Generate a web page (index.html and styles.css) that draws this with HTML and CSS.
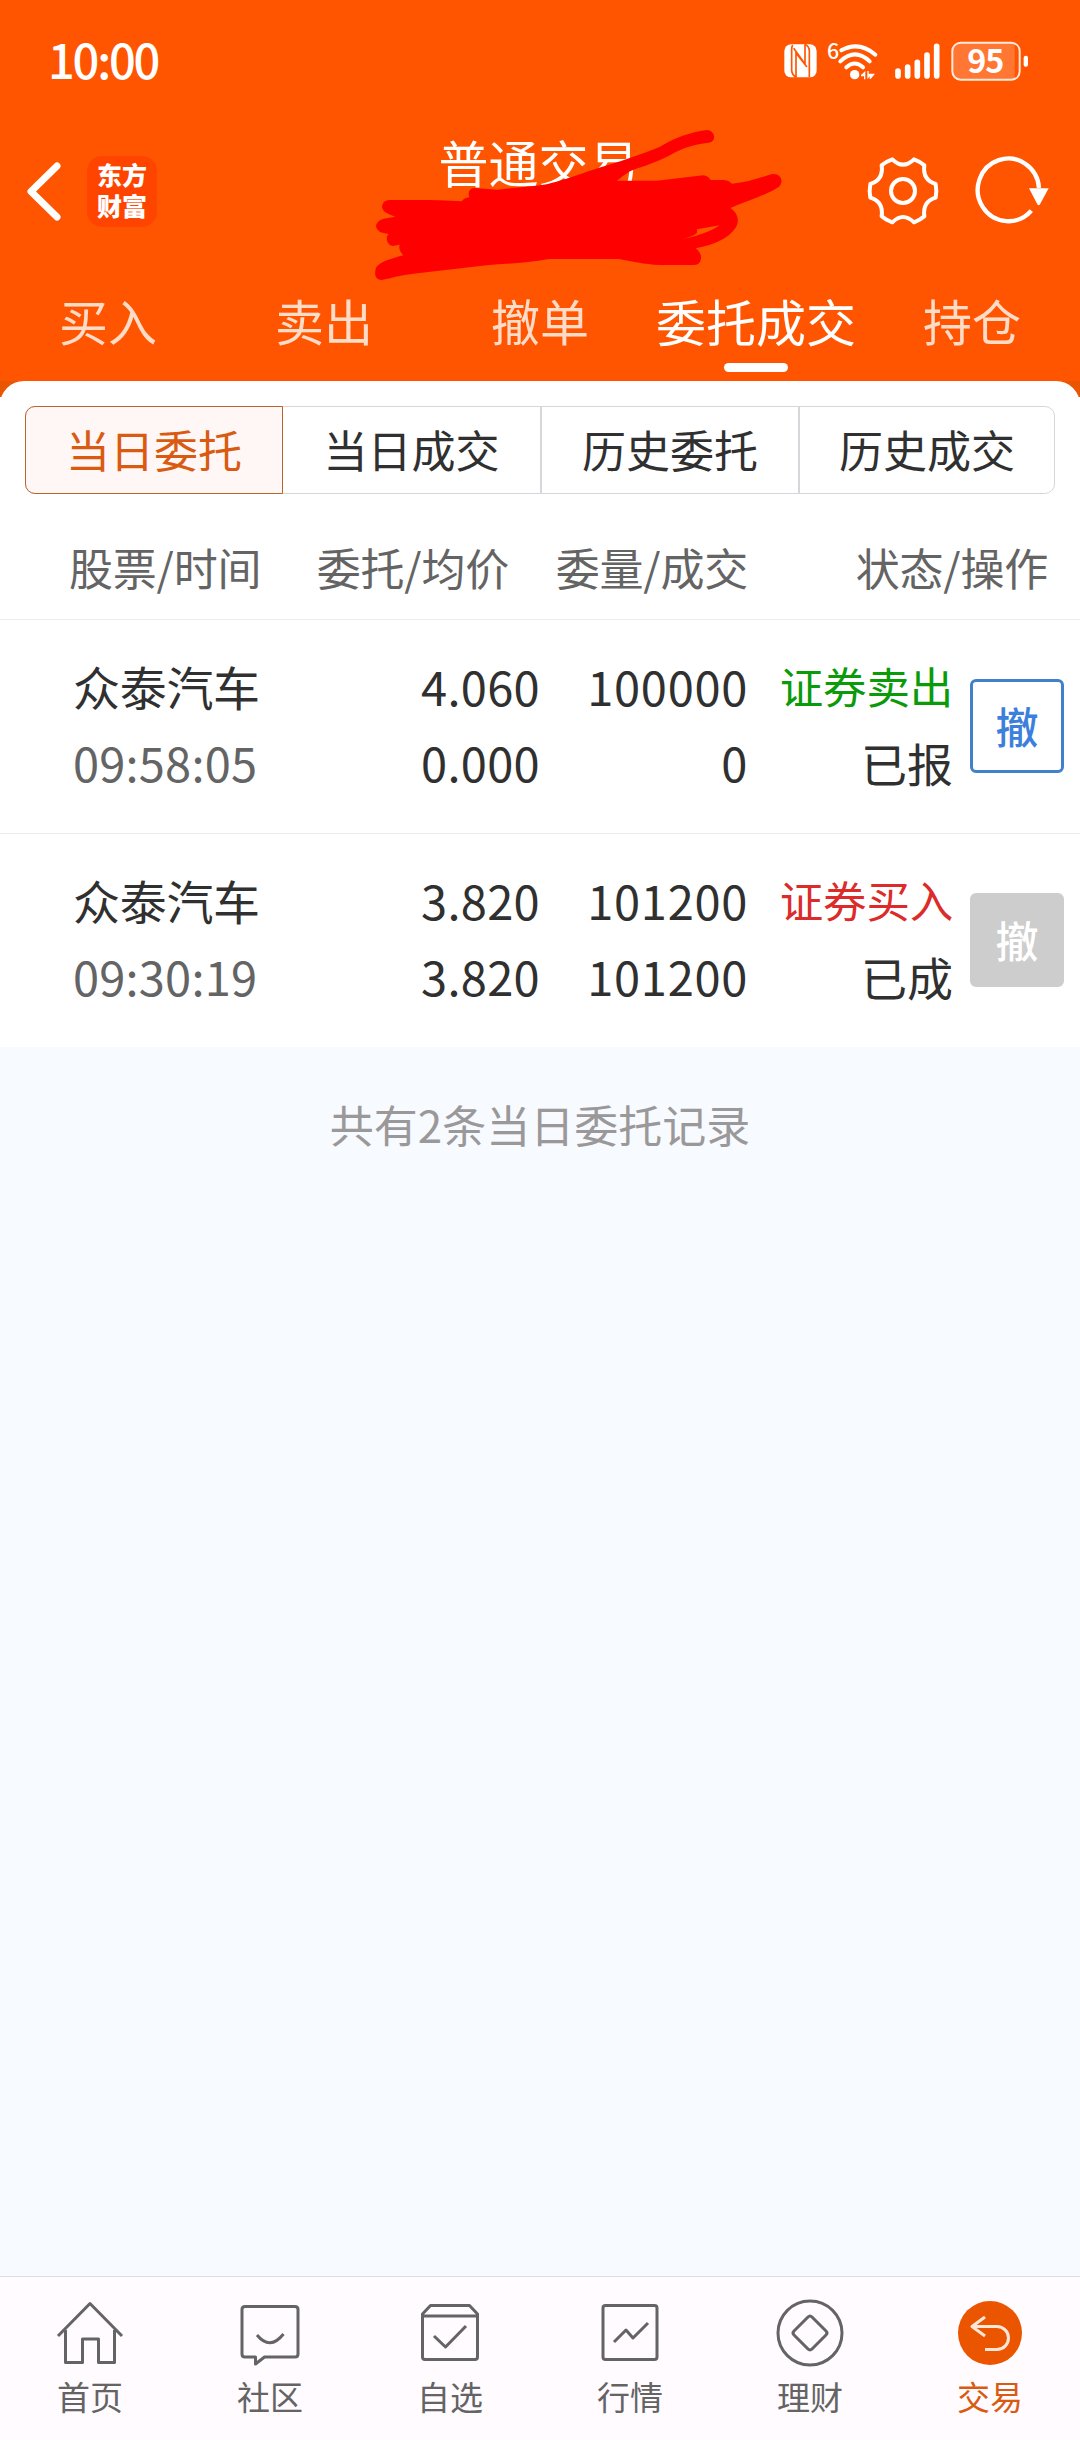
FILE: index.html
```html
<!DOCTYPE html>
<html lang="zh-CN">
<head>
    <meta charset="UTF-8">
    <meta name="viewport" content="width=device-width, initial-scale=1.0">
    <title>普通交易</title>
    <link rel="stylesheet" href="styles.css">
</head>
<body>
    <header class="header">
        <div class="status-bar">
            <span class="clock">10:00</span>
            <div class="status-icons">
                <svg class="icon-nfc" width="33" height="34" viewBox="72 71 99 102">
                    <rect x="73" y="72" width="97" height="99" rx="20" fill="#fff"/>
                    <path d="M98 74Q95 78 95 90V150Q96 165 110 171M148 171V92Q148 78 134 72" fill="none" stroke="#ff5500" stroke-width="5"/>
                    <path d="M108 170V98L141 140M135 73V131L101 84" fill="none" stroke="#ff5500" stroke-width="5"/>
                </svg>
                <svg class="icon-wifi" width="51" height="39" viewBox="200 62 153 117">
                    <text x="200" y="114" class="wifi-gen">6</text>
                    <g fill="none" stroke="#fff" stroke-width="12" stroke-linecap="round">
                        <path d="M243 87Q296 58 345 100"/>
                        <path d="M240 120Q284 78 328 120"/>
                        <path d="M258 138Q283 115 308 138"/>
                    </g>
                    <circle cx="283" cy="160" r="14" fill="#fff"/>
                    <path d="M302 161L315 149V174H311V165H302ZM321 149H325V157H344L331 173H328V165L321 174Z" fill="#fff"/>
                </svg>
                <svg class="icon-signal" width="45" height="36" viewBox="403 67 135 108">
                    <g stroke="#fff" stroke-width="17" stroke-linecap="round">
                        <path d="M412 151V166M441 139V166M470 125V166M499 103V166M528 77V166"/>
                    </g>
                </svg>
                <svg class="icon-battery" width="78" height="40" viewBox="572 61 234 120">
                    <rect x="576" y="66" width="202" height="111" rx="25" fill="#ff7733" stroke="#ffe9dc" stroke-width="6"/>
                    <path d="M763 72Q774 75 774 91V152Q774 168 763 171Z" fill="#ff5500"/>
                    <rect x="790" y="105" width="13" height="33" rx="6" fill="#fff"/>
                    <text x="675" y="158" text-anchor="middle" class="battery-level">95</text>
                </svg>
            </div>
        </div>

        <div class="title-bar">
            <div class="title-left">
                <svg width="35" height="60" viewBox="0 0 35 60">
                    <path d="M30 5L4 30.500L30 56" fill="none" stroke="#fff" stroke-width="7" stroke-linecap="round" stroke-linejoin="round"/>
                </svg>
                <div class="logo">东方<br>财富</div>
            </div>
            <h1 class="title">普通交易</h1>
            <div class="title-right">
                <svg width="72" height="70" viewBox="321 406 216 210">
                    <g fill="none" stroke="#fff" stroke-width="12" stroke-linejoin="round">
                        <path d="M397 416Q429 448 462 416Q481 423 493 434Q487 478 527 490Q531 511 527 531Q487 543 493 587Q481 598 462 605Q429 573 397 605Q377 598 365 587Q371 543 331 531Q327 511 331 490Q371 478 365 434Q377 423 397 416Z"/>
                        <circle cx="429" cy="511" r="36"/>
                    </g>
                </svg>
                <svg width="76" height="70" viewBox="642 409 228 210">
                    <path d="M837 505A92 94 0 1 0 814 573" fill="none" stroke="#fff" stroke-width="13"/>
                    <path d="M807 506H866L840 554Q836 560 832 554Z" fill="#fff"/>
                </svg>
            </div>
            <!-- hand-drawn cover over the account number -->
            <svg class="scribble" width="440" height="190" viewBox="0 0 1320 570">
                <path fill="#ff0000" d="M87 270C160 270 230 268 305 274Q312 264 328 262Q320 237 343 234L412 239C460 232 510 232 560 223C640 203 690 180 745 165C800 148 850 130 900 110C945 83 990 67 1040 60C1068 62 1069 95 1047 98C1000 103 960 117 930 136C885 160 830 175 810 184Q790 196 772 212H890L1030 196Q1045 198 1052 210H1090Q1106 211 1116 221C1160 218 1200 203 1237 192C1264 190 1272 215 1257 230C1215 257 1160 274 1111 294C1136 310 1138 336 1127 353C1105 385 1065 403 1007 415Q1025 429 1023 446Q1020 465 1000 465H900C850 463 815 454 777 447H567C500 459 440 461 380 466L160 491C125 494 95 504 64 510C46 508 42 493 48 473C60 455 90 447 130 436Q114 421 119 404L97 408Q77 401 81 379L86 372Q50 369 48 349Q49 332 71 326L106 320C84 312 69 307 66 291Q67 272 87 270Z"/>
                <path fill="#ff5500" d="M1011 358L1079 346C1050 367 1006 379 962 389Q1006 377 1011 368Z"/>
            </svg>
        </div>

        <nav class="tabs">
            <a class="tab">买入</a>
            <a class="tab">卖出</a>
            <a class="tab">撤单</a>
            <a class="tab active">委托成交</a>
            <a class="tab">持仓</a>
        </nav>
    </header>

    <main class="main">
        <div class="panel-wrap">
            <div class="panel">
                <div class="segments">
                    <button class="segment active">当日委托</button>
                    <button class="segment">当日成交</button>
                    <button class="segment">历史委托</button>
                    <button class="segment">历史成交</button>
                </div>

                <div class="list-head">
                    <span>股票/时间</span>
                    <span>委托/均价</span>
                    <span>委量/成交</span>
                    <span>状态/操作</span>
                </div>

                <div class="order">
                    <div class="cell stock"><span>众泰汽车</span><span class="time">09:58:05</span></div>
                    <div class="cell price"><span>4.060</span><span>0.000</span></div>
                    <div class="cell"><span>100000</span><span>0</span></div>
                    <div class="cell state"><span class="side sell">证券卖出</span><span>已报</span></div>
                    <button class="cancel">撤</button>
                </div>

                <div class="order">
                    <div class="cell stock"><span>众泰汽车</span><span class="time">09:30:19</span></div>
                    <div class="cell price"><span>3.820</span><span>3.820</span></div>
                    <div class="cell"><span>101200</span><span>101200</span></div>
                    <div class="cell state"><span class="side buy">证券买入</span><span>已成</span></div>
                    <button class="cancel" disabled>撤</button>
                </div>
            </div>
        </div>

        <p class="summary">共有2条当日委托记录</p>
    </main>

    <nav class="bottom-nav">
        <a class="nav-item">
            <svg width="70" height="70" viewBox="0 0 70 70">
                <path d="M3 42L35 9.500L67 42M10.500 36V68.500H27.500V45H43.500V68.500H59.500V36"/>
            </svg>
            <span>首页</span>
        </a>
        <a class="nav-item">
            <svg width="70" height="70" viewBox="0 0 70 70">
                <path d="M10 12.500H60Q63 12.500 63 15.500V60Q63 63 60 63H29.500L20.500 70V63H10Q7 63 7 60V15.500Q7 12.500 10 12.500Z"/>
                <path d="M22 41Q35 57 48.500 40"/>
            </svg>
            <span>社区</span>
        </a>
        <a class="nav-item">
            <svg width="70" height="70" viewBox="0 0 70 70">
                <path d="M7.500 20L15.500 11.500H54.500L62.500 20V63Q62.500 65.500 60 65.500H10Q7.500 65.500 7.500 63ZM7.500 22H62.500M19 42L30.500 53L51 32"/>
            </svg>
            <span>自选</span>
        </a>
        <a class="nav-item">
            <svg width="70" height="70" viewBox="0 0 70 70">
                <rect x="8" y="11.500" width="54" height="54" rx="2.500"/>
                <path d="M19 48L31 36L38 44L53 29"/>
            </svg>
            <span>行情</span>
        </a>
        <a class="nav-item">
            <svg width="70" height="70" viewBox="0 0 70 70">
                <circle cx="35" cy="39" r="32"/>
                <path d="M33 23Q35 21 37 23L51 37Q53 39 51 41L37 55Q35 57 33 55L19 41Q17 39 19 37Z"/>
            </svg>
            <span>理财</span>
        </a>
        <a class="nav-item active">
            <svg width="70" height="70" viewBox="0 0 70 70">
                <circle class="disc" cx="35" cy="39" r="32"/>
                <path class="arrow" d="M30 23L17 32.500L30 42M18 32.500H42A11 11 0 0 1 42 55.500H30"/>
            </svg>
            <span>交易</span>
        </a>
    </nav>
</body>
</html>
```
FILE: styles.css
```css
* {
    box-sizing: border-box;
}

body {
    margin: 0;
    width: 1080px;
    height: 2440px;
    display: flex;
    flex-direction: column;
    background: #f7faff;
    color: #303030;
    font-family: "Noto Sans CJK SC", sans-serif;
    overflow: hidden;
}

button {
    margin: 0;
    padding: 0;
    font-family: inherit;
    color: inherit;
    background: none;
    border: none;
}

svg {
    display: block;
    flex: none;
    overflow: visible;
}

/* header */
.header {
    height: 381px;
    background: #ff5500;
    color: #fff;
}

.status-bar {
    height: 122px;
    padding: 0 51px 0 48px;
    display: flex;
    justify-content: space-between;
    align-items: center;
}

.clock {
    font-size: 47px;
    font-weight: 500;
    letter-spacing: -2.2px;
    line-height: 60px;
    margin-top: -5px;
}

.status-icons {
    display: flex;
    align-items: center;
}

.icon-wifi {
    margin-left: 10px;
}

.icon-signal {
    margin-left: 17px;
}

.icon-battery {
    margin-left: 11px;
}

.wifi-gen {
    font-size: 64px;
    font-weight: 500;
    fill: #fff;
}

.battery-level {
    font-size: 97px;
    font-weight: 700;
    letter-spacing: -3px;
    fill: #fff;
}

.title-bar {
    position: relative;
    height: 138px;
    padding: 0 30px 0 27px;
    display: grid;
    grid-template-columns: 1fr auto 1fr;
    align-items: center;
}

.title-left {
    display: flex;
    align-items: center;
    gap: 25px;
}

.logo {
    width: 70px;
    height: 71px;
    padding-top: 3px;
    border-radius: 15px;
    background: #ff4400;
    font-size: 25px;
    font-weight: 900;
    line-height: 31px;
    text-align: center;
}

.title {
    margin: 0;
    padding-bottom: 60px;
    font-size: 50px;
    font-weight: 400;
    line-height: 60px;
}

.title-right {
    display: flex;
    justify-content: flex-end;
    gap: 35px;
}

.scribble {
    position: absolute;
    left: 360px;
    top: -12px;
}

.tabs {
    display: grid;
    grid-template-columns: repeat(5, 1fr);
}

.tab {
    display: flex;
    flex-direction: column;
    align-items: center;
    padding-top: 30px;
    font-size: 49px;
    line-height: 60px;
    color: #ffdcc8;
}

.tab.active {
    font-size: 50px;
    color: #fff;
    white-space: nowrap;
}

.tab.active::after {
    content: "";
    width: 64px;
    height: 9px;
    margin-top: 13px;
    border-radius: 5px;
    background: #fff;
}

/* orders */
.main {
    flex: 1;
}

/* darker band that shows behind the rounded corners */
.panel-wrap {
    background: linear-gradient(#ea5504 16px, #fff 16px);
}

.panel {
    padding-top: 25px;
    background: #fff;
    border-radius: 24px 24px 0 0;
}

.segments {
    display: grid;
    grid-template-columns: 257px 257px 258px 1fr;
    height: 88px;
    margin: 0 25px;
    border: 1px solid #d6d7db;
    border-radius: 10px;
}

.segment {
    padding-bottom: 3px;
    font-size: 44px;
    border-left: 2px solid #d6d7db;
}

.segment:nth-child(2) {
    border-left: none;
}

.segment.active {
    margin: -1px 0 -1px -1px;
    color: #d95b12;
    background: #fff6f6;
    border: 1px solid #b9632f;
    border-radius: 10px 0 0 10px;
}

.list-head {
    display: grid;
    grid-template-columns: 240px 200px 239px 300px;
    height: 126px;
    padding-left: 69px;
    border-bottom: 1px solid #ededed;
    font-size: 44px;
    line-height: 147px;
    letter-spacing: -0.2px;
    color: #646464;
    text-align: right;
}

.list-head span:first-child {
    text-align: left;
}

.order {
    display: grid;
    grid-template-columns: 228px 239px 209px 205px 94px;
    height: 214px;
    padding: 28px 0 0 73px;
    border-bottom: 1px solid #ededed;
}

.order:last-child {
    height: 213px;
    border-bottom: none;
}

.cell {
    display: flex;
    flex-direction: column;
    align-items: flex-end;
    margin-right: 1px;
    font-size: 47px;
    line-height: 76px;
    letter-spacing: 0.7px;
}

.price {
    margin-right: 0;
    letter-spacing: 0.3px;
}

.stock {
    align-items: flex-start;
    letter-spacing: -0.3px;
}

.time {
    letter-spacing: 0.2px;
    color: #646464;
}

.state {
    font-size: 46px;
    letter-spacing: 0;
}

.side {
    font-size: 43.5px;
    letter-spacing: -0.2px;
}

.sell {
    color: #0a9a0a;
}

.buy {
    color: #dc2b2b;
}

.cancel {
    width: 94px;
    height: 94px;
    margin: 31px 0 0 16px;
    padding-bottom: 3px;
    border: 3px solid #4080cc;
    border-radius: 6px;
    font-size: 43px;
    font-weight: 500;
    color: #3c80dc;
}

.cancel:disabled {
    border-color: #cdcdcd;
    background: #cdcdcd;
    color: #fff;
}

.summary {
    margin: 45px 0 0;
    font-size: 44px;
    line-height: 64px;
    text-align: center;
    color: #9b9899;
}

/* bottom navigation */
.bottom-nav {
    display: grid;
    grid-template-columns: repeat(6, 1fr);
    height: 164px;
    padding-top: 17px;
    border-top: 1px solid #dddde2;
    background: #fffbff;
}

.nav-item {
    display: flex;
    flex-direction: column;
    align-items: center;
    font-size: 33px;
    line-height: 40px;
    color: #646464;
}

.nav-item span {
    margin-top: 12px;
}

.nav-item svg {
    fill: none;
    stroke: #646464;
    stroke-width: 3;
    stroke-linejoin: round;
}

.nav-item.active {
    color: #d95b12;
}

.nav-item .disc {
    fill: #eb5500;
    stroke: none;
}

.nav-item .arrow {
    stroke: #ffe6d7;
}
```
